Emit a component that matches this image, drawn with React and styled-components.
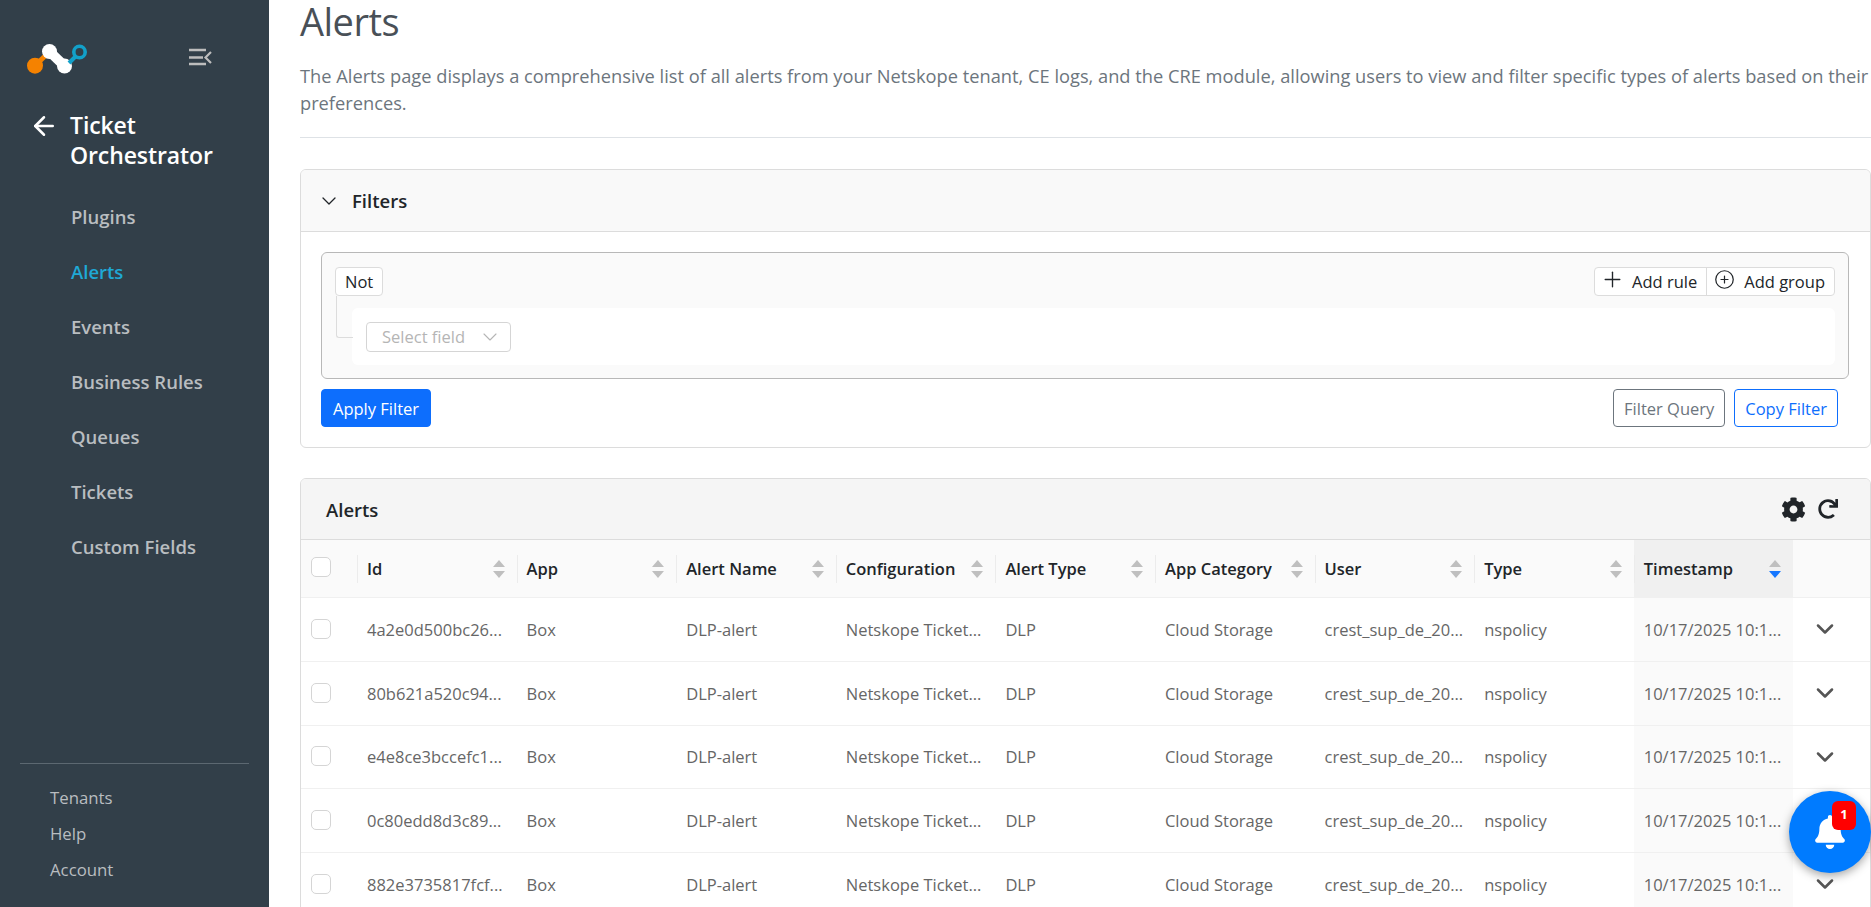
import React from 'react';
import styled, { createGlobalStyle } from 'styled-components';
import { ArrowLeft, ChevronDown, Plus, CirclePlus } from 'lucide-react';
import { FaBell, FaCog, FaRedo } from 'react-icons/fa';

const GlobalStyle = createGlobalStyle`
	* { box-sizing: border-box; }
	html, body { margin: 0; height: 100%; overflow: hidden; }
	body {
		font-family: 'Open Sans', 'Noto Sans', sans-serif;
		font-size: 16.5px;
		color: #212529;
		background: #fff;
	}
`;

const Page = styled.div`
	display: flex;
	width: 1871px;
	height: 907px;
	overflow: hidden;
`;

/* 사이드바 */
const Sidebar = styled.aside`
	flex: 0 0 269px;
	display: flex;
	flex-direction: column;
	height: 100%;
	background: #323f49;
`;

const SidebarTop = styled.div`
	display: flex;
	align-items: center;
	justify-content: space-between;
	height: 30px;
	margin: 44px 57px 0 27px;
`;

const ToggleBtn = styled.svg`
	width: 24px;
	height: 18px;
	margin-bottom: 4px;
	color: #bdbdbd;
`;

const Module = styled.div`
	display: flex;
	gap: 11px;
	margin: 36px 0 0 29px;
	color: #fff;
	font-size: 23px;
	font-weight: 600;
	line-height: 30px;
	letter-spacing: -0.1px;
	svg { flex: none; margin-top: 1px; }
`;

const Nav = styled.nav`
	display: flex;
	flex-direction: column;
	gap: 30px;
	margin: 34px 0 0 71px;
`;

const NavItem = styled.a`
	height: 25px;
	color: ${({ $active }) => ($active ? '#1fa9d6' : '#b9bdc0')};
	font-size: 18.5px;
	font-weight: 600;
	line-height: 25px;
`;

const SidebarFoot = styled.div`
	display: flex;
	flex-direction: column;
	gap: 14px;
	margin: auto 20px 0;
	padding: 23px 0 26px 30px;
	border-top: 1px solid #5c6871;
`;

const FootItem = styled.a`
	height: 22px;
	color: #b9bdc0;
	font-size: 16.8px;
	line-height: 22px;
`;

/* 본문 */
const Main = styled.main`
	flex: 1;
	min-width: 0;
	padding: 0 0 0 31px;
`;

const Title = styled.h1`
	margin: 0;
	height: 42px;
	color: #495057;
	font-size: 38px;
	font-weight: 400;
	line-height: 42px;
	letter-spacing: -0.5px;
`;

const Lead = styled.p`
	margin: 20px 0 0;
	color: #6c757d;
	font-size: 18.25px;
	line-height: 27px;
	white-space: nowrap;
`;

const Rule = styled.hr`
	margin: 21px 0 0;
	border: 0;
	border-top: 1px solid #dee2e6;
`;

const Card = styled.section`
	margin-top: ${({ $top }) => $top}px;
	border: 1px solid #dcdcdc;
	border-radius: 6px;
	overflow: hidden;
`;

const CardHead = styled.header`
	display: flex;
	align-items: center;
	justify-content: space-between;
	height: ${({ $h }) => $h}px;
	padding: ${({ $pad }) => $pad};
	background: ${({ $bg }) => $bg};
	border-bottom: 1px solid #dcdcdc;
`;

const HeadLabel = styled.div`
	display: flex;
	align-items: center;
	gap: 11px;
	font-size: 18.5px;
	font-weight: 600;
`;

const FilterBody = styled.div`
	padding: 20px 21px 20px 20px;
`;

const Builder = styled.div`
	padding: 14px 13px 13px;
	border: 1px solid #b8b8b8;
	border-radius: 6px;
	background: #fafafa;
`;

const BuilderTop = styled.div`
	display: flex;
	justify-content: space-between;
`;

const Combinator = styled.div`
	height: 29px;
	padding: 0 9px;
	border: 1px solid #dcdcdc;
	border-radius: 4px;
	background: #fff;
	line-height: 27px;
`;

const BtnGroup = styled.div`
	display: flex;
	height: 29px;
	border: 1px solid #dcdcdc;
	border-radius: 4px;
	background: #fff;
`;

const GroupBtn = styled.div`
	display: flex;
	align-items: center;
	gap: ${({ $gap }) => $gap}px;
	padding: 0 9px 0 ${({ $left }) => $left}px;
	line-height: 27px;
	& + & { border-left: 1px solid #dcdcdc; }
	svg { margin-top: -4px; }
`;

const RuleRow = styled.div`
	position: relative;
	display: flex;
	align-items: center;
	height: 57px;
	margin: 12px 0 0 17px;
	padding-left: 14px;
	border-radius: 6px;
	background: #fff;

	&::before {
		content: '';
		position: absolute;
		left: -16px;
		top: -12px;
		width: 16px;
		height: 41px;
		border-left: 1px solid #dcdcdc;
		border-bottom: 1px solid #dcdcdc;
		border-bottom-left-radius: 3px;
	}
`;

const FieldSelect = styled.div`
	display: flex;
	align-items: center;
	justify-content: space-between;
	width: 145px;
	height: 30px;
	padding: 0 8px 0 15px;
	border: 1px solid #d5d5d5;
	border-radius: 4px;
	color: #b5b5b5;
`;

const ActionRow = styled.div`
	display: flex;
	justify-content: space-between;
	margin: 10px 11px 0 0;
`;

const Actions = styled.div`
	display: flex;
	gap: 9px;
`;

const Btn = styled.button`
	height: 38px;
	padding: 0 ${({ $solid }) => ($solid ? 11 : 10)}px;
	border: 1px solid ${({ $color }) => $color};
	border-radius: 4px;
	background: ${({ $solid, $color }) => ($solid ? $color : '#fff')};
	color: ${({ $solid, $color }) => ($solid ? '#fff' : $color)};
	font-family: inherit;
	font-size: 16.5px;
`;

const Tools = styled.div`
	display: flex;
	align-items: center;
	gap: 12px;
	color: #212529;
`;

/* 테이블 */
const Grid = styled.div`
	display: grid;
	grid-template-columns: 56px repeat(9, 159.6px) 1fr;
`;

const Th = styled.div`
	position: relative;
	display: flex;
	align-items: center;
	justify-content: space-between;
	height: 58px;
	padding: 0 12px 0 10px;
	background: ${({ $sorted }) => ($sorted ? '#f0f0f0' : '#fafafa')};
	border-bottom: 1px solid #f0f0f0;
	font-size: 16.5px;
	font-weight: 600;

	&::before {
		content: '';
		position: absolute;
		left: 0;
		top: 15px;
		height: 28px;
		border-left: 1px solid #ececec;
	}
	&:empty::before { display: none; }
`;

const Td = styled.div`
	display: flex;
	align-items: center;
	height: 63.75px;
	padding: 0 10px;
	background: ${({ $sorted }) => ($sorted ? '#fafafa' : '#fff')};
	border-bottom: 1px solid #f0f0f0;
	color: #666;
	font-size: 16.5px;
	white-space: nowrap;
`;

const CheckCell = styled(Td)`
	padding: 0 0 ${({ $head }) => ($head ? '3px' : '1px')} 10px;
	height: ${({ $head }) => ($head ? '58px' : '63.75px')};
	background: ${({ $head }) => ($head ? '#fafafa' : '#fff')};
`;

const Check = styled.span`
	width: 20px;
	height: 20px;
	border: 1px solid #d5d5d5;
	border-radius: 5px;
	background: #fff;
`;

const Sorter = styled.span`
	display: flex;
	flex-direction: column;
	gap: 4px;
`;

const Caret = styled.i`
	width: 0;
	height: 0;
	border-left: 6px solid transparent;
	border-right: 6px solid transparent;
	${({ $up }) => ($up ? 'border-bottom' : 'border-top')}: 7px solid ${({ $on }) => ($on ? '#1677ff' : '#bfbfbf')};
`;

const ExpandCell = styled(Td)`
	justify-content: center;
	padding: 0 14px 0 0;
	color: #555;
`;

const Fab = styled.div`
	position: fixed;
	left: 1789px;
	top: 791px;
	display: flex;
	align-items: center;
	justify-content: center;
	width: 82px;
	height: 82px;
	border-radius: 50%;
	background: #007bff;
	color: #fff;
	box-shadow: 0 3px 10px rgba(0, 0, 0, 0.35);
`;

const Badge = styled.span`
	position: absolute;
	left: 43px;
	top: 10px;
	width: 24px;
	height: 29px;
	border-radius: 6px;
	background: #f00;
	color: #fff;
	font-size: 13px;
	font-weight: 700;
	line-height: 27px;
	text-align: center;
`;

const columns = ['Id', 'App', 'Alert Name', 'Configuration', 'Alert Type', 'App Category', 'User', 'Type', 'Timestamp'];
const ids = ['4a2e0d500bc26...', '80b621a520c94...', 'e4e8ce3bccefc1...', '0c80edd8d3c89...', '882e3735817fcf...'];
const navItems = ['Plugins', 'Alerts', 'Events', 'Business Rules', 'Queues', 'Tickets', 'Custom Fields'];

export default function App() {
	return (
		<Page>
			<GlobalStyle />
			<Sidebar>
				<SidebarTop>
					<svg width="60" height="30" viewBox="27 44 60 30" fill="none">
						<path d="M35 65.7L46 55" stroke="#f58200" strokeWidth="5" />
						<circle cx="35" cy="65.7" r="8" fill="#f58200" />
						<path d="M49.5 51.5L64.5 66" stroke="#fff" strokeWidth="10" />
						<circle cx="49.5" cy="51.5" r="7.5" fill="#fff" />
						<circle cx="64.5" cy="66" r="7.5" fill="#fff" />
						<path d="M69 63L76 56" stroke="#12a0c9" strokeWidth="4" />
						<circle cx="79.5" cy="52" r="5.7" stroke="#12a0c9" strokeWidth="3.6" />
					</svg>
					<ToggleBtn viewBox="0 0 24 18" fill="none" stroke="currentColor">
						<path d="M1 2h17M1 9.5h14M1 16h17" strokeWidth="2.4" />
						<path d="M23 4l-5.5 5.5L23 15" strokeWidth="2.2" />
					</ToggleBtn>
				</SidebarTop>
				<Module>
					<ArrowLeft size={30} strokeWidth={2} />
					<div>Ticket<br />Orchestrator</div>
				</Module>
				<Nav>
					{navItems.map((item) => (
						<NavItem key={item} $active={item === 'Alerts'}>{item}</NavItem>
					))}
				</Nav>
				<SidebarFoot>
					<FootItem>Tenants</FootItem>
					<FootItem>Help</FootItem>
					<FootItem>Account</FootItem>
				</SidebarFoot>
			</Sidebar>
			<Main>
				<Title>Alerts</Title>
				<Lead>
					The Alerts page displays a comprehensive list of all alerts from your Netskope tenant, CE logs, and the CRE module, allowing users to view and filter specific types of alerts based on their<br />
					preferences.
				</Lead>
				<Rule />
				{/* 필터 */}
				<Card $top={31}>
					<CardHead $h={62} $bg="#f9f9f9" $pad="0 0 0 16px">
						<HeadLabel><ChevronDown size={24} strokeWidth={1.3} />Filters</HeadLabel>
					</CardHead>
					<FilterBody>
						<Builder>
							<BuilderTop>
								<Combinator>Not</Combinator>
								<BtnGroup>
									<GroupBtn $left={5} $gap={7}><Plus size={25} strokeWidth={1.3} />Add rule</GroupBtn>
									<GroupBtn $left={7} $gap={9}><CirclePlus size={21} strokeWidth={1.4} />Add group</GroupBtn>
								</BtnGroup>
							</BuilderTop>
							<RuleRow>
								<FieldSelect>Select field<ChevronDown size={24} strokeWidth={1.1} /></FieldSelect>
							</RuleRow>
						</Builder>
						<ActionRow>
							<Btn $solid $color="#0d6efd">Apply Filter</Btn>
							<Actions>
								<Btn $color="#6c757d">Filter Query</Btn>
								<Btn $color="#0d6efd">Copy Filter</Btn>
							</Actions>
						</ActionRow>
					</FilterBody>
				</Card>
				{/* 알림 테이블 */}
				<Card $top={30}>
					<CardHead $h={61} $bg="#f5f5f5" $pad="0 32px 0 25px">
						<HeadLabel>Alerts</HeadLabel>
						<Tools><FaCog size={25} /><FaRedo size={20} /></Tools>
					</CardHead>
					<Grid>
						<CheckCell $head><Check /></CheckCell>
						{columns.map((col) => (
							<Th key={col} $sorted={col === 'Timestamp'}>
								{col}
								<Sorter>
									<Caret $up />
									<Caret $on={col === 'Timestamp'} />
								</Sorter>
							</Th>
						))}
						<Th />
						{ids.map((id) => (
							<React.Fragment key={id}>
								<CheckCell><Check /></CheckCell>
								<Td>{id}</Td>
								<Td>Box</Td>
								<Td>DLP-alert</Td>
								<Td>Netskope Ticket...</Td>
								<Td>DLP</Td>
								<Td>Cloud Storage</Td>
								<Td>crest_sup_de_20...</Td>
								<Td>nspolicy</Td>
								<Td $sorted>10/17/2025 10:1...</Td>
								<ExpandCell><ChevronDown size={28} strokeWidth={2.2} /></ExpandCell>
							</React.Fragment>
						))}
					</Grid>
				</Card>
			</Main>
			<Fab>
				<FaBell size={34} />
				<Badge>1</Badge>
			</Fab>
		</Page>
	);
}
